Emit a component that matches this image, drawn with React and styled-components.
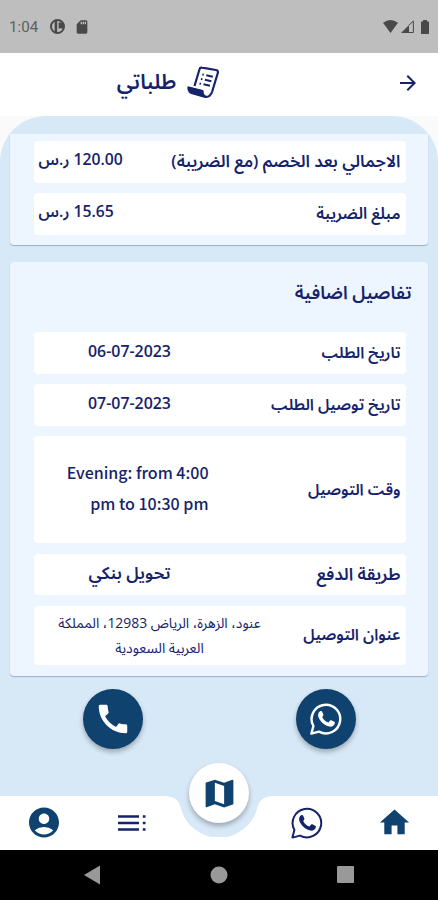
import styled, { createGlobalStyle, ThemeProvider } from "styled-components";
import {
  MdAccountCircle,
  MdArrowForward,
  MdCall,
  MdHome,
  MdMap,
  MdSdCard,
} from "react-icons/md";

const theme = {
  navy: "#10426f",
  ink: "#15236b",
  sky: "#d7e8f7",
  card: "#edf5ff",
};

const GlobalStyle = createGlobalStyle`
  * {
    box-sizing: border-box;
  }

  body {
    margin: 0;
    background-color: #fff;
    font-family: "Open Sans", "Noto Sans Arabic", "DejaVu Sans Condensed", "DejaVu Sans", sans-serif;
  }
`;

const Screen = styled.div`
  width: 438px;
  height: 900px;
  display: flex;
  flex-direction: column;
  overflow: hidden;
  color: ${({ theme }) => theme.ink};
`;

const StatusBar = styled.div`
  flex: 0 0 52.5px;
  display: flex;
  align-items: center;
  justify-content: space-between;
  padding: 1px 5px 0 9px;
  background-color: #bebebe;
  color: #494949;
`;

const StatusGroup = styled.div`
  display: flex;
  align-items: center;
  gap: ${({ $gap }) => $gap}px;
`;

const Clock = styled.span`
  width: 30px;
  margin-right: 2px;
  font-family: Roboto, sans-serif;
  font-size: 15.2px;
  color: #606060;
  white-space: nowrap;
`;

const Header = styled.header`
  flex: 0 0 63.5px;
  display: grid;
  grid-template-columns: 60px 1fr 60px;
  align-items: center;
  padding-bottom: 4px;
  background-color: #fff;
`;

const PageTitle = styled.h1`
  grid-column: 2;
  display: flex;
  align-items: center;
  justify-content: center;
  gap: 11px;
  margin: 0 0 0 -102px;
  font-size: 21px;
  font-weight: 600;
  white-space: nowrap;
`;

const BackButton = styled.button`
  display: flex;
  justify-content: center;
  padding: 2px 0 0;
  border: 0;
  background: none;
  color: ${({ theme }) => theme.ink};
`;

const Body = styled.div`
  flex: 1;
  display: flex;
  flex-direction: column;
  background-color: #fafafa;
  min-height: 0;
`;

const Sheet = styled.main`
  flex: 1;
  padding: 18px 10px 0;
  border-radius: 46px 46px 0 0;
  background-color: ${({ theme }) => theme.sky};
`;

const Card = styled.section`
  display: flex;
  flex-direction: column;
  gap: 10.5px;
  height: ${({ $height }) => $height}px;
  margin-bottom: 17px;
  padding: 7px 22.5px 0 23.5px;
  border-radius: ${({ $cut }) => ($cut ? "0 0 4px 4px" : "4px")};
  background-color: ${({ theme }) => theme.card};
  box-shadow: 0 1px 1px rgba(60, 90, 120, 0.4);
`;

const CardTitle = styled.h2`
  height: 52.5px;
  margin: 0 -6px 0 0;
  padding-top: 7px;
  font-size: 18.1px;
  font-weight: 600;
  line-height: 32px;
  white-space: nowrap;
`;

const Row = styled.div`
  display: flex;
  align-items: center;
  justify-content: space-between;
  height: ${({ $height = 41.5 }) => $height}px;
  padding: 0 5px;
  border-radius: 4px;
  background-color: #fff;
`;

const Label = styled.span`
  font-size: ${({ $size = 15.7 }) => $size}px;
  font-weight: 600;
  white-space: nowrap;
`;

const Price = styled.span`
  padding-bottom: 3px;
  font-size: 15.7px;
  font-weight: 600;
  white-space: nowrap;
`;

const Value = styled.span`
  width: 182px;
  padding-bottom: ${({ $lift = 4 }) => $lift}px;
  font-size: ${({ $size = 15.9 }) => $size}px;
  font-weight: 600;
  text-align: center;
  white-space: nowrap;
`;

const TimeValue = styled.span`
  width: 170px;
  padding-bottom: 3px;
  font-family: "Noto Sans CJK SC", sans-serif;
  font-size: 16px;
  font-weight: 500;
  line-height: 31px;
`;

const Address = styled.span`
  width: 216px;
  margin-left: 13px;
  font-size: 13.9px;
  font-weight: 400;
  line-height: 25px;
  text-align: center;
  white-space: nowrap;
`;

const Contacts = styled.div`
  display: flex;
  justify-content: space-between;
  margin-top: -4.5px;
  padding: 0 72px 0 72.5px;
`;

const RoundButton = styled.button`
  display: flex;
  align-items: center;
  justify-content: center;
  width: 60px;
  height: 60px;
  padding: 0;
  border: 0;
  border-radius: 50%;
  background-color: ${({ theme, $light }) => ($light ? "#fff" : theme.navy)};
  color: ${({ theme, $light }) => ($light ? theme.navy : "#fff")};
  box-shadow: 0 3px 5px rgba(0, 0, 0, 0.28);
`;

const TabBar = styled.nav`
  position: relative;
  flex: 0 0 53.5px;
  display: flex;
  justify-content: space-between;
  align-items: center;
  padding: 0 26px;
  background-color: #fff;
  color: ${({ theme }) => theme.navy};
`;

const Tab = styled.div`
  display: flex;
  justify-content: center;
  width: 36px;
  color: ${({ theme, $outline }) => ($outline ? theme.ink : theme.navy)};
`;

const Notch = styled.svg`
  position: absolute;
  left: 164px;
  top: 0;
`;

const MapButton = styled(RoundButton)`
  position: absolute;
  left: 189px;
  top: -33px;
`;

const SystemBar = styled.div`
  flex: 0 0 50.5px;
  display: flex;
  justify-content: space-between;
  align-items: center;
  padding: 0 84px;
  background-color: #000;
`;

const orderRows = [
  { label: "تاريخ الطلب", value: "06-07-2023" },
  { label: "تاريخ توصيل الطلب", value: "07-07-2023" },
];

function WhatsappIcon({ size, stroke = 2.4 }) {
  return (
    <svg width={size} height={size} viewBox="0 0 32 32" fill="none" stroke="currentColor">
      <path
        d="M1.4 30.6l2-7.6A14.3 14.3 0 1 1 9 28.6z"
        strokeWidth={stroke}
        strokeLinejoin="round"
      />
      <path
        d="M10 8.3c.8-.5 1.7-.5 2.1.3l1.2 2.9c.3.7-.1 1.3-1.1 2.4 1.4 2.8 3.4 4.6 6.2 5.7l1.7-2c.4-.4.8-.5 1.3-.3l2.8 1.4c.8.4.8.7.6 1.6-.5 2.4-3.1 3.7-5.2 3.3-5.5-1.1-9.3-4.8-11.2-9.5-.8-2.1 0-4.6 1.6-5.8z"
        fill="currentColor"
        stroke="none"
      />
    </svg>
  );
}

function ListIcon() {
  return (
    <svg width="28" height="16" viewBox="0 0 28 16" stroke="currentColor" strokeWidth="2.5">
      <path d="M0 1.5h21M0 8h21M0 14.5h21M24.8 1.5h2.7M24.8 8h2.7M24.8 14.5h2.7" />
    </svg>
  );
}

function ReceiptIcon() {
  return (
    <svg width="32" height="33" viewBox="0 0 32 33" fill="none" stroke="currentColor">
      <path
        d="M7.5 20L12.5 3.2Q13 1.3 15 1.7L29 4Q31.5 4.6 30.8 7L25.2 25.5Q23 32 17.5 30.8L4.5 27Q1.5 25.5 1.4 21.5L15.5 25Q15.4 29.5 18.5 30.5"
        strokeWidth="2.2"
        strokeLinejoin="round"
      />
      <path d="M.8 20.5l14.4 3.7 1 5-1.2 1.2L4 27.3q-3-2-3.2-6.8z" fill="currentColor" stroke="none" />
      <path
        d="M15.3 8.5l1.5.3M19.3 9.3l6.5 1.4M13.9 13l1.5.3M17.9 13.8l6.5 1.4M12.5 17.5l1.5.3M16.5 18.3l6.5 1.4"
        strokeWidth="2"
      />
    </svg>
  );
}

function App() {
  return (
    <ThemeProvider theme={theme}>
      <GlobalStyle />
      <Screen>
        <StatusBar>
          <StatusGroup $gap={9}>
            <Clock>1:04</Clock>
            <svg width="15" height="15" viewBox="0 0 15 15">
              <circle cx="7.5" cy="7.5" r="6.5" fill="none" stroke="currentColor" strokeWidth="2" />
              <path d="M4.6 2h2.6v11H4.6zM8.6 3.6h4.6v5.8H8.6z" fill="currentColor" />
            </svg>
            <MdSdCard size={16} />
          </StatusGroup>
          <StatusGroup $gap={3}>
            <svg width="15" height="13" viewBox="0 0 15 13">
              <path d="M0 2.8Q7.5-2.8 15 2.8L7.5 13z" fill="currentColor" />
            </svg>
            <svg width="13" height="13" viewBox="0 0 13 13">
              <path d="M0 13L8 5v8z" fill="currentColor" />
              <path d="M8 5l4.4-4v11.5H8" fill="none" stroke="currentColor" />
            </svg>
            <svg width="16" height="14" viewBox="0 0 16 14">
              <path d="M4 1.5h2V0h4v1.5h2V14H4z" fill="currentColor" />
            </svg>
          </StatusGroup>
        </StatusBar>

        <Header>
          <PageTitle>
            <span dir="rtl">طلباتي</span>
            <ReceiptIcon />
          </PageTitle>
          <BackButton>
            <MdArrowForward size={24} />
          </BackButton>
        </Header>

        <Body>
          <Sheet dir="rtl">
            <Card $height={111} $cut>
              <Row>
                <Label $size={16.85}>الاجمالي بعد الخصم (مع الضريبة)</Label>
                <Price>120.00 ر.س</Price>
              </Row>
              <Row>
                <Label $size={16.1}>مبلغ الضريبة</Label>
                <Price>15.65 ر.س</Price>
              </Row>
            </Card>

            <Card $height={414}>
              <CardTitle>تفاصيل اضافية</CardTitle>
              {orderRows.map(({ label, value }) => (
                <Row key={label}>
                  <Label>{label}</Label>
                  <Value>{value}</Value>
                </Row>
              ))}
              <Row $height={107}>
                <Label>وقت التوصيل</Label>
                <TimeValue>
                  Evening: from 4:00
                  <br />
                  pm to 10:30 pm
                </TimeValue>
              </Row>
              <Row>
                <Label $size={17.2}>طريقة الدفع</Label>
                <Value $size={17.1} $lift={1}>تحويل بنكي</Value>
              </Row>
              <Row $height={59.5}>
                <Label>عنوان التوصيل</Label>
                <Address>
                  عنود، الزهرة، الرياض 12983، المملكة
                  <br />
                  العربية السعودية
                </Address>
              </Row>
            </Card>

            <Contacts>
              <RoundButton>
                <WhatsappIcon size={32} />
              </RoundButton>
              <RoundButton>
                <MdCall size={38} />
              </RoundButton>
            </Contacts>
          </Sheet>
        </Body>

        <TabBar>
          <Notch width="110" height="41" viewBox="0 0 110 41">
            <path d="M0 0Q14 0 16.5 11A39.5 39.5 0 0 0 93.5 11Q96 0 110 0z" fill={theme.sky} />
          </Notch>
          <Tab>
            <MdAccountCircle size={37} />
          </Tab>
          <Tab $outline>
            <ListIcon />
          </Tab>
          <Tab />
          <Tab $outline>
            <WhatsappIcon size={32} stroke={2} />
          </Tab>
          <Tab>
            <MdHome size={35} />
          </Tab>
          <MapButton $light>
            <MdMap size={37} />
          </MapButton>
        </TabBar>

        <SystemBar>
          <svg width="16" height="20" viewBox="0 0 16 20">
            <path d="M0 10L16 .5v19z" fill="#999" />
          </svg>
          <svg width="18" height="18" viewBox="0 0 18 18">
            <circle cx="9" cy="9" r="8.5" fill="#999" />
          </svg>
          <svg width="17" height="17" viewBox="0 0 17 17">
            <rect width="17" height="17" rx="1" fill="#999" />
          </svg>
        </SystemBar>
      </Screen>
    </ThemeProvider>
  );
}

export default App;
